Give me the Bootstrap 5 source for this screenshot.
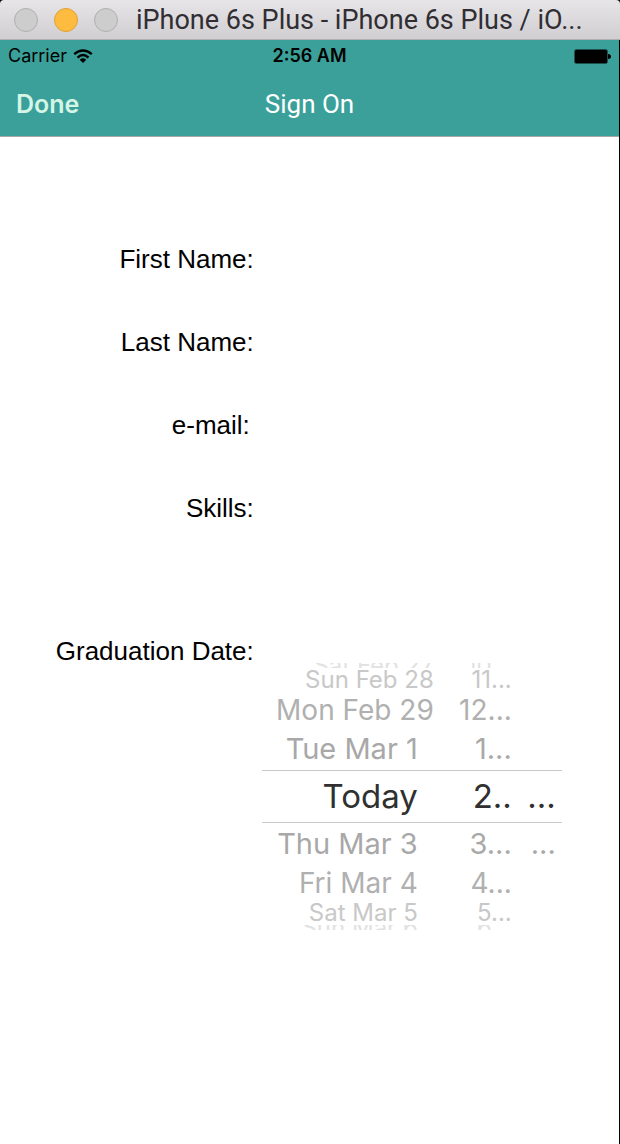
<!DOCTYPE html>
<html lang="en">
<head>
<meta charset="utf-8">
<meta name="viewport" content="width=device-width, initial-scale=1">
<title>Sign On</title>
<link href="https://cdn.jsdelivr.net/npm/bootstrap@5.3.0/dist/css/bootstrap.min.css" rel="stylesheet">
<style>
  body { font-family: "Liberation Sans", Arial, sans-serif; font-size: 26px; line-height: 32px; color: #000; background: #000; }
  .window-bar { height: 40px; padding-left: 14px; gap: 16px; background: linear-gradient(#e8e5e8, #d1ced1); border-bottom: 1px solid #b1afb1; border-radius: 4px 4px 0 0; }
  .window-dot { width: 24px; height: 24px; flex: none; padding: 0; border: 1px solid #b0aeb0; border-radius: 50%; background: #cdcdcd; }
  .window-dot.minimize { background: #fdbc40; border-color: #e0a034; }
  .window-title { margin-right: 28px; padding-left: 2px; font: 27px/38px Roboto, sans-serif; color: #302e33; }
  .screen { margin-right: 1px; background: #fff; }
  .top-area { background: #3aa099; border-bottom: 1px solid #a5a9a9; }
  .thirds { display: grid; grid-template-columns: 1fr auto 1fr; align-items: center; }
  .status { height: 32px; padding: 0 8px; font: 18px/32px Inter, sans-serif; }
  .carrier { gap: 6px; }
  .status-time { font-weight: 600; }
  .titlebar { height: 64px; padding: 0 16px; color: #fff; font: 26px/32px Roboto, sans-serif; }
  .done { font: 600 25px/32px Inter, sans-serif; color: #d5f5e6; }
  .fields { padding-top: 97px; }
  .field { display: grid; grid-template-columns: 41% 1fr; column-gap: 8px; min-height: 50px; margin-bottom: 33px; }
  .field > label, .field-name { padding-top: 9px; text-align: right; }
  .field.date { margin-top: 93px; }
  .field input { min-width: 0; border: 0; outline: 0; background: transparent; }
  .wheel { width: 300px; max-width: 100%; margin-top: 37px; font-family: Inter, sans-serif; color: #a8a8a8; }
  .wheel-row { display: grid; grid-template-columns: 172px 78px 1fr; overflow: hidden; white-space: nowrap; }
  .wheel-row span { text-align: right; }
  .wheel-row span:nth-child(3) { padding-right: 6px; }
  .single span:first-child { padding-right: 16px; }
  .edge { height: 5px; font-size: 24px; line-height: 5px; color: #e2e2e2; }
  .far { height: 24px; font-size: 24px; line-height: 24px; color: #c8c8c8; }
  .mid { height: 36px; font-size: 28px; line-height: 36px; color: #b0b0b0; }
  .near { height: 42px; font-size: 29px; line-height: 42px; }
  .chosen { height: 53px; font-size: 33px; line-height: 51px; color: #303030; border-top: 1px solid #c8c8c8; border-bottom: 1px solid #c8c8c8; }
</style>
</head>
<body>
<header class="window-bar d-flex align-items-center">
  <button type="button" class="window-dot" aria-label="Close"></button>
  <button type="button" class="window-dot minimize" aria-label="Minimize"></button>
  <button type="button" class="window-dot" aria-label="Zoom"></button>
  <div class="window-title text-truncate">iPhone 6s Plus - iPhone 6s Plus / iO...</div>
</header>
<main class="screen min-vh-100">
  <div class="top-area">
    <div class="thirds status">
      <div class="carrier d-flex align-items-center">
        <span>Carrier</span>
        <svg width="20" height="15" viewBox="0 0 20 15" aria-hidden="true">
          <g fill="none" stroke="#000" stroke-width="2.4"><path d="M1.2 5.2Q10-2.4 18.8 5.2"/><path d="M4.5 8.6Q10 3.6 15.5 8.6"/></g>
          <path d="M6.7 10.7Q10 8 13.3 10.7L10 14Z"/>
        </svg>
      </div>
      <div class="status-time">2:56 AM</div>
      <svg class="ms-auto" width="37" height="15" viewBox="0 0 37 15" aria-hidden="true">
        <rect x=".5" y=".5" width="33" height="14" rx="2" fill="#000" stroke="#1d504c"/>
        <path d="M34 5Q37 5 37 7.5T34 10Z"/>
      </svg>
    </div>
    <nav class="thirds titlebar">
      <button type="button" class="done border-0 bg-transparent p-0 text-start">Done</button>
      <div>Sign On</div>
    </nav>
  </div>
  <form class="fields">
    <div class="field"><label for="first">First Name:</label><input id="first" type="text"></div>
    <div class="field"><label for="last">Last Name:</label><input id="last" type="text"></div>
    <div class="field"><label for="email" class="pe-1">e-mail:</label><input id="email" type="email"></div>
    <div class="field"><label for="skills">Skills:</label><input id="skills" type="text"></div>
    <div class="field date">
      <div class="field-name" id="grad">Graduation Date:</div>
      <div class="wheel" role="listbox" aria-labelledby="grad" tabindex="0">
        <div class="wheel-row edge" role="option"><span>Sat Feb 27</span><span>10...</span></div>
        <div class="wheel-row far" role="option"><span>Sun Feb 28</span><span>11...</span></div>
        <div class="wheel-row mid" role="option"><span>Mon Feb 29</span><span>12...</span></div>
        <div class="wheel-row near single" role="option"><span>Tue Mar 1</span><span>1...</span></div>
        <div class="wheel-row chosen single" role="option" aria-selected="true"><span>Today</span><span>2..</span><span>...</span></div>
        <div class="wheel-row near single" role="option"><span>Thu Mar 3</span><span>3...</span><span>...</span></div>
        <div class="wheel-row mid single" role="option"><span>Fri Mar 4</span><span>4...</span></div>
        <div class="wheel-row far single" role="option"><span>Sat Mar 5</span><span>5...</span></div>
        <div class="wheel-row edge single" role="option"><span>Sun Mar 6</span><span>6...</span></div>
      </div>
    </div>
  </form>
</main>
<script src="https://cdn.jsdelivr.net/npm/bootstrap@5.3.0/dist/js/bootstrap.bundle.min.js"></script>
</body>
</html>
